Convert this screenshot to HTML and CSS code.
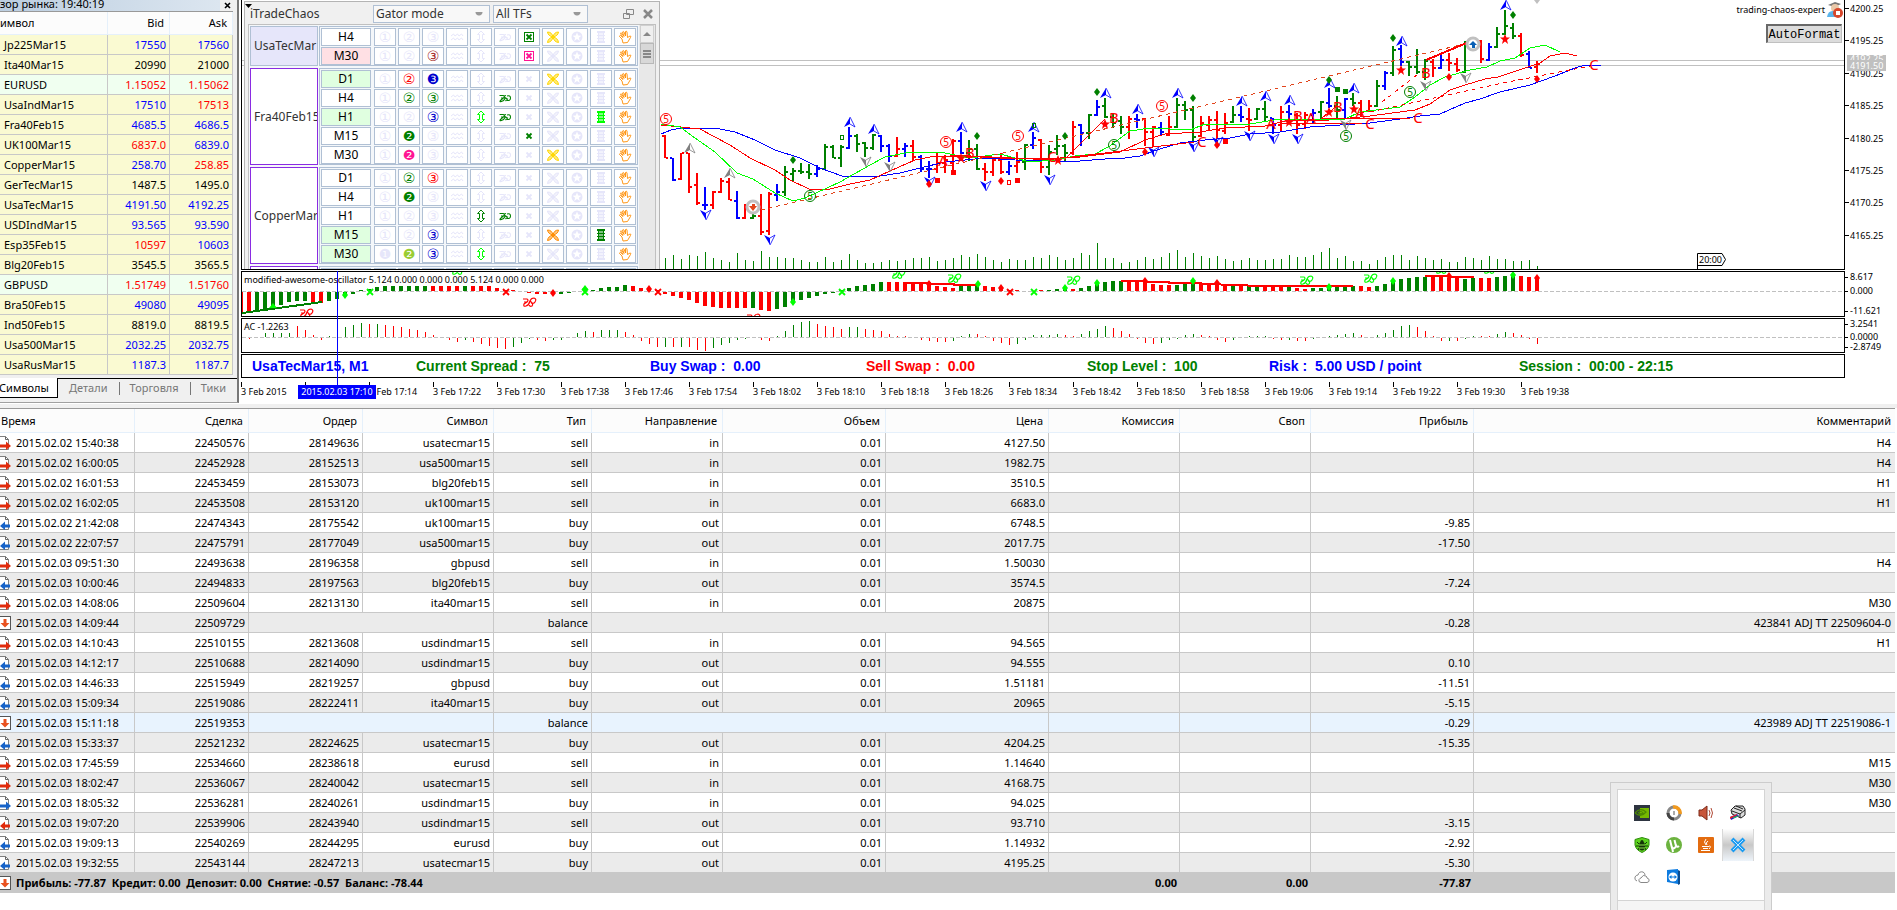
FILE: index.html
```html
<!DOCTYPE html>
<html lang="ru">
<head>
  <meta charset="UTF-8">
  <meta name="viewport" content="width=device-width, initial-scale=1.0">
  <title>UsaTecMar15, M1</title>
  <link rel="stylesheet" href="styles.css">
</head>
<body>
  <!-- Shared icons -->
  <svg class="sprite" aria-hidden="true">
    <symbol id="i-arrows" viewBox="0 0 14 14"><path d="M7 1 L10.500 4.500 H8.500 V9.500 H10.500 L7 13 L3.500 9.500 H5.500 V4.500 H3.500 Z" fill="none" stroke="currentColor"/></symbol>
    <symbol id="i-loop" viewBox="0 0 14 14"><path d="M1.500 4.500 H5 Q7 4.500 6 6.500 L2.500 9.500 Q1 11 3.500 10.500 Q6 10 7 7.500 Q5 5 8 4.500 M3 7 H6 M7.500 10 L9.500 8 L7 6.500 M9 5 Q12.500 4 12.500 7 Q12.500 10 9 9.500" fill="none" stroke="currentColor" stroke-width="1.100"/></symbol>
    <symbol id="i-x" viewBox="0 0 14 14"><path d="M4.500 4.500 L9.500 9.500 M9.500 4.500 L4.500 9.500" stroke="currentColor" stroke-width="1.800"/></symbol>
    <symbol id="i-boxx" viewBox="0 0 14 14"><rect x="2.500" y="2.500" width="9" height="9" fill="none" stroke="currentColor"/><path d="M4.500 4.500 L9.500 9.500 M9.500 4.500 L4.500 9.500" stroke="currentColor" stroke-width="1.800"/></symbol>
    <symbol id="i-petals" viewBox="0 0 14 14"><path d="M7 7 Q2 6 1.500 2 Q6 2 7 7 Q8 2 12.500 2 Q12 6 7 7 Q12 8 12.500 12.500 Q8 12 7 7 Q6 12 1.500 12.500 Q2 8 7 7" fill="currentColor" fill-opacity="0.500" stroke="currentColor"/></symbol>
    <symbol id="i-star" viewBox="0 0 14 14"><circle cx="7" cy="7" r="5.500" fill="currentColor"/><path d="M7 2.500 L8.200 5.600 L11.400 5.700 L8.900 7.700 L9.800 10.900 L7 9.100 L4.200 10.900 L5.100 7.700 L2.600 5.700 L5.800 5.600 Z" fill="#fff"/></symbol>
    <symbol id="i-list" viewBox="0 0 14 14"><path d="M3 1 H11 V3 H10 V5 H11 V6 H10 V8 H11 V9 H10 V11 H11 V13 H3 V11 H4 V9 H3 V8 H4 V6 H3 V5 H4 V3 H3 Z" fill="currentColor"/><path d="M5 4 H9 M5 7 H9 M5 10 H9" stroke="#fff"/></symbol>
    <symbol id="i-hand" viewBox="0 0 14 14"><path d="M5 13 L4 9 L1.500 6.500 Q1.500 5.500 2.500 5.500 L5 7.500 L2.500 3.500 Q2.500 2.500 3.500 3 L6 6.500 L4.500 2 Q5 1 6 2 L7.500 6 L7.500 1.500 Q8.500 .5 9 2 L9.500 7.500 L12 6 Q13.500 6 12.500 7.500 L9.500 12.500 Z" fill="#fff" stroke="currentColor" stroke-width="0.900"/></symbol>
    <symbol id="i-waves" viewBox="0 0 14 14"><path d="M1 6 L3.500 4 L5 6 L7.500 4 L9 6 L11.500 4 L13 6 M1 10 L3.500 8 L5 10 L7.500 8 L9 10 L11.500 8 L13 10" fill="none" stroke="currentColor"/></symbol>
    <symbol id="i-doc" viewBox="0 0 12 16"><path d="M-1 1.500 H5.500 L8.500 4.500 V14.500 H-1" fill="#fff" stroke="#808080"/><path d="M5.500 1.500 V4.500 H8.500" fill="none" stroke="#666"/></symbol>
    <symbol id="i-right" viewBox="0 0 12 16"><path d="M0 9.500 H6 V6.500 L11 11 L6 15 V12.500 H0 Z" fill="currentColor"/></symbol>
    <symbol id="i-left" viewBox="0 0 12 16"><path d="M10 9.500 H5 V6.500 L0 11 L5 15 V12.500 H10 Z" fill="currentColor"/></symbol>
    <symbol id="i-balance" viewBox="0 0 12 16"><rect x="-2.500" y="1.500" width="13" height="13" fill="#fff" stroke="#555"/><path d="M3.500 4 H6.500 V8 H9.500 L5 12.500 L.5 8 H3.500 Z" fill="#e8501e"/></symbol>
  </svg>

  <div class="top">
    <aside class="watch">
      <div class="watch-title"><span>Обзор рынка: 19:40:19</span>
        <button class="watch-close" aria-label="Close"><svg width="7" height="7"><path d="M1 1 L6 6 M6 1 L1 6" stroke="#000" stroke-width="1.600"/></svg></button>
      </div>
      <table class="quotes">
        <thead><tr><th class="q-symbol">Символ</th><th class="q-bid">Bid</th><th class="q-ask">Ask</th></tr></thead>
        <tbody id="quotes"></tbody>
      </table>
      <nav class="tabs">
        <button class="tab active">Символы</button>
        <button class="tab">Детали</button>
        <button class="tab">Торговля</button>
        <button class="tab">Тики</button>
      </nav>
    </aside>

    <main class="chart">
      <div class="pane price-pane">
        <div class="plot">
          <svg id="price" class="canvas"></svg>
          <div class="expert">trading-chaos-expert
            <svg width="16" height="16"><path d="M1 3 L8 0 L14 2 L8 5 Z" fill="#777"/><circle cx="8" cy="6" r="4" fill="#e9c8a8"/><path d="M0 15 Q1 8 7 9 L10 15 Z" fill="#5cb4ea"/><circle cx="11" cy="11" r="5" fill="#d8472b"/><rect x="9" y="9" width="4" height="4" fill="#fff"/></svg>
          </div>
          <button class="autoformat">AutoFormat</button>
        </div>
        <svg id="price-axis" class="axis"></svg>

        <section class="chaos">
          <div class="chaos-bar">
            <span class="chaos-title">iTradeChaos</span>
            <select class="chaos-mode" aria-label="Mode"><option>Gator mode</option></select>
            <select class="chaos-tf" aria-label="Timeframes"><option>All TFs</option></select>
            <button class="chaos-btn" aria-label="Restore"><svg width="11" height="10"><path d="M3.500 .5 H10.500 V5.500 H3.500 Z M.5 4.500 H6.500 V9.500 H.5 Z" fill="#f0f0f0" stroke="#888"/></svg></button>
            <button class="chaos-btn" aria-label="Close"><svg width="10" height="10"><path d="M1 1 L9 9 M9 1 L1 9" stroke="#888" stroke-width="2.500"/></svg></button>
          </div>
          <div class="chaos-body">
            <div class="groups" id="groups"></div>
            <div class="scroll">
              <div class="scroll-up"></div>
              <div class="scroll-thumb"><i></i><i></i><i></i></div>
            </div>
          </div>
        </section>
        <svg class="corner" width="7" height="4"><path d="M0 0 H7 L3.500 4 Z"/></svg>
      </div>

      <div class="pane ao-pane">
        <div class="plot"><svg id="ao" class="canvas"></svg><span class="pane-label">modified-awesome-oscillator 5.124 0.000 0.000 0.000 5.124 0.000 0.000</span></div>
        <svg id="ao-axis" class="axis"></svg>
      </div>
      <div class="pane ac-pane">
        <div class="plot"><svg id="ac" class="canvas"></svg><span class="pane-label">AC -1.2263</span></div>
        <svg id="ac-axis" class="axis"></svg>
      </div>
      <div class="pane info-pane">
        <div class="plot info">
          <span class="blue">UsaTecMar15, M1</span>
          <span class="green">Current Spread :&nbsp; 75</span>
          <span class="blue">Buy Swap :&nbsp; 0.00</span>
          <span class="red">Sell Swap :&nbsp; 0.00</span>
          <span class="green">Stop Level :&nbsp; 100</span>
          <span class="blue">Risk :&nbsp; 5.00 USD / point</span>
          <span class="green">Session :&nbsp; 00:00 - 22:15</span>
        </div>
      </div>
      <div class="times" id="times"></div>
      <div class="crosshair"></div>
      <div class="crosshair-date">2015.02.03 17:10</div>
    </main>
  </div>

  <section class="history">
    <table class="deals">
      <colgroup>
        <col class="c-time"><col class="c-id"><col class="c-id"><col class="c-mid"><col class="c-type"><col class="c-mid">
        <col class="c-wide"><col class="c-wide"><col class="c-mid"><col class="c-mid"><col class="c-wide"><col>
      </colgroup>
      <thead>
        <tr><th>Время</th><th>Сделка</th><th>Ордер</th><th>Символ</th><th>Тип</th><th>Направление</th><th>Объем</th><th>Цена</th><th>Комиссия</th><th>Своп</th><th>Прибыль</th><th>Комментарий</th></tr>
      </thead>
      <tbody id="deals"></tbody>
      <tfoot>
        <tr>
          <td colspan="8"><svg class="deal-icon"><use href="#i-balance"/></svg>Прибыль: -77.87&nbsp; Кредит: 0.00&nbsp; Депозит: 0.00&nbsp; Снятие: -0.57&nbsp; Баланс: -78.44</td>
          <td>0.00</td><td>0.00</td><td>-77.87</td><td></td>
        </tr>
      </tfoot>
    </table>
  </section>

  <div class="tray">
    <div class="tray-icons">
      <button aria-label="NVIDIA"><svg width="16" height="16"><rect width="16" height="16" fill="#2d3440"/><path d="M6 3 H15 V13 H6 Z" fill="#76b900"/><path d="M1 8 Q6 2 12 7 Q7 13 1 8 M4 8 Q7 5 9 8 Q7 10 5 8" fill="none" stroke="#4d8a00" stroke-width="1.200"/></svg></button>
      <button aria-label="Updater"><svg width="16" height="16"><circle cx="8" cy="8" r="6" fill="#fff" stroke="#888" stroke-width="3"/><path d="M7 2 A6 6 0 0 1 14 9" fill="none" stroke="#f39a1d" stroke-width="3.500"/><path d="M8 14 A6 6 0 0 1 2 8" fill="none" stroke="#444" stroke-width="3"/><path d="M7 6 H9 V10 H7 Z" fill="#aaa"/></svg></button>
      <button aria-label="Volume"><svg width="16" height="16"><path d="M1 5 H4 L9 1 V15 L4 11 H1 Z" fill="#c8553a" stroke="#7c2a18"/><path d="M11 5 Q13 8 11 11 M13 3 Q16 8 13 13" fill="none" stroke="#b04a36"/></svg></button>
      <button aria-label="Printer"><svg width="16" height="16"><path d="M1 5 L5 1 L13 1 L15 4 V10 L11 13 L2 9 Z" fill="#ddd" stroke="#222"/><path d="M2 6 L10 9 L15 5 M4 3 L12 6 M10 9 V13 M6 1 L13 4" stroke="#222" fill="none"/><path d="M0 12 L7 9 L9 11 L1 15 Z" fill="#22c"/><path d="M0 12 L7 9 V10 L0 14 Z" fill="#e22"/><path d="M3 13 L8 11" stroke="#2c4"/></svg></button>
      <button aria-label="Antivirus"><svg width="16" height="16"><path d="M8 .5 L15 2.500 V8 Q14 13 8 15.500 Q2 13 1 8 V2.500 Z" fill="#5dd21e" stroke="#2f8d0c"/><ellipse cx="8" cy="9" rx="3" ry="4.500" fill="#143508"/><circle cx="8" cy="4.500" r="1.500" fill="#143508"/><path d="M3 5 L5 7 M13 5 L11 7 M2 9 H14 M4 13 L5 11 M12 13 L11 11" stroke="#143508"/><path d="M5 8 H11 M5 11 H11" stroke="#8ee04e"/></svg></button>
      <button aria-label="Torrent"><svg width="16" height="16"><circle cx="8" cy="8" r="8" fill="#6cb33f"/><path d="M4 3 L6 11 Q9 12 10 9 L8.500 3 M10 8 Q11 11 13 9 M6 10 L7 15" fill="none" stroke="#fff" stroke-width="2"/></svg></button>
      <button aria-label="Java"><svg width="16" height="16"><rect width="16" height="16" rx="1" fill="#e36c10"/><path d="M8 2 Q5 5 8 8 M10 4 Q7 6 9 8 M4 9.500 H11 M5 11.500 H10 M3 13.500 H12 M11 9 Q14 9 11 12" fill="none" stroke="#fff"/></svg></button>
      <button class="selected" aria-label="Tools"><svg width="16" height="16"><path d="M2 2 L14 14 M14 2 L2 14" stroke="#1b9cf2" stroke-width="4"/><path d="M3 3 L13 13 M13 3 L3 13" stroke="#bfe4ff" stroke-width="1"/></svg></button>
      <button aria-label="Cloud"><svg width="16" height="16"><path d="M3 12 Q0 11 1 8 Q2 6 4 6 Q5 2 9 3 Q11 4 11 6" fill="none" stroke="#888"/><path d="M7 13.500 Q4 13 5 10.500 Q6 9 7 9 Q9 5 12 7 Q13 8 13 9 Q16 10 15 12 Q15 13 13 13.500 Z" fill="#fff" stroke="#888"/></svg></button>
      <button aria-label="TeamViewer"><svg width="16" height="16"><path d="M1 1 L12 0 V15 L1 13 Z" fill="#0d7be0"/><path d="M12 1 L14 2 V15 L12 16 Z" fill="#0a4d92"/><circle cx="7" cy="8" r="4.500" fill="#fff"/><path d="M3 8 L5.500 6 V7.500 H8.500 V6 L11 8 L8.500 10 V8.500 H5.500 V10 Z" fill="#0d7be0"/></svg></button>
    </div>
    <div class="tray-foot"></div>
  </div>

  <script src="script.js"></script>
</body>
</html>
```
FILE: styles.css
```css
:root {
  --ui-font: "Noto Sans", "Open Sans", sans-serif;
  --grid: #c8c8c8;
  --stripe: #ebebeb;
  --steel: #b0c0d4;
}

* {
  box-sizing: border-box;
}

body {
  margin: 0;
  overflow: hidden;
  background: #fff;
  color: #000;
  font: 11px/16px var(--ui-font);
}

button {
  padding: 0;
  border: 0;
  background: none;
  font: inherit;
  color: inherit;
}

svg {
  display: block;
}

.sprite {
  position: absolute;
  width: 0;
  height: 0;
}

.blue { color: #00f; }
.red { color: #f00; }
.green { color: #008000; }

.top {
  display: flex;
}

/* Market watch */
.watch {
  width: 239px;
  flex: none;
  padding-right: 4px;
  background: #f0f0f0;
  border-right: 2px solid #777;
  border-bottom: 1px solid #a0a0a0;
  overflow: hidden;
}

.watch-title {
  display: flex;
  justify-content: space-between;
  align-items: flex-end;
  height: 12px;
  overflow: hidden;
  background: linear-gradient(90deg, #bccee0, #dce6f0 220px, #f0f0f0 220px);
  border-bottom: 1px solid #999;
}

.watch-title span {
  margin-left: -15px;
  line-height: 15px;
}

.watch-close {
  padding: 2px;
}

table {
  border-collapse: separate;
  border-spacing: 0;
  table-layout: fixed;
  width: 100%;
}

th, td {
  padding: 0 3px;
  text-align: right;
  white-space: nowrap;
  overflow: hidden;
}

th {
  font-weight: normal;
  height: 24px;
  padding-right: 5px;
  background: #fcfcfc;
  border-right: 1px solid #e5f0fb;
  border-bottom: 1px solid #e5f0fb;
}

td {
  height: 20px;
  border-right: 1px solid var(--grid);
  border-bottom: 1px solid var(--grid);
}

.quotes th { height: 23px; }
.quotes .q-symbol { width: 108px; text-indent: -10px; }
.quotes .q-bid { width: 62px; }
.quotes td:first-child { padding-left: 4px; }
.quotes th:first-child, .quotes td:first-child { text-align: left; }
.quotes td { background: #fafad2; }
.quotes .fx td { background: #f0fff0; }

.tabs {
  display: flex;
  height: 27px;
  margin-right: -4px;
  padding-top: 3px;
}

.tab {
  height: 19px;
  flex: 1 1 auto;
  border-top: 1px solid #000;
  color: #777;
}

.tab + .tab + .tab {
  background: linear-gradient(#777, #777) 0 center / 1px 13px no-repeat;
}

.tab.active {
  flex: 0 0 58px;
  height: 20px;
  text-indent: -9px;
  color: #000;
  background: #fff;
  border-top: 0;
  border-right: 1px solid #000;
  border-bottom: 1px solid #000;
}

/* Chart */
.chart {
  position: relative;
  flex: 1;
  margin-left: 2px;
  min-width: 0;
  font: 9px/14px var(--ui-font);
}

.pane {
  display: flex;
  margin-bottom: 1px;
}

.plot {
  position: relative;
  flex: 1;
  margin-right: 52px;
  border: 1px solid #000;
  overflow: hidden;
}

.axis {
  width: 52px;
  margin-left: -52px;
  flex: none;
  height: auto;
  overflow: visible;
}

.canvas {
  width: 100%;
  height: 100%;
}

.canvas polyline {
  shape-rendering: crispEdges;
}

.price-pane { height: 270px; }
.price-pane .plot { border-top: 0; }
.ao-pane { height: 46px; }
.ac-pane { height: 35px; }
.info-pane { height: 24px; margin-bottom: 0; }

svg text {
  font-family: var(--ui-font);
}

.pane-label {
  position: absolute;
  left: 2px;
  top: 1px;
}

.expert {
  position: absolute;
  top: 2px;
  right: 1px;
  display: flex;
  align-items: center;
  gap: 2px;
}

.autoformat {
  position: absolute;
  top: 24px;
  right: 2px;
  width: 76px;
  height: 19px;
  background: #dcdcdc;
  border: 1px solid;
  border-width: 2px 1px 1px 2px;
  border-color: #696969 #c0c0c0 #c0c0c0 #696969;
  font: 12px/18px "Liberation Mono", monospace;
}

.info {
  display: grid;
  grid-template-columns: 164px 234px 216px 221px 182px 250px auto;
  align-items: center;
  padding-left: 10px;
  font: bold 14px/16px "Liberation Sans", Arial, sans-serif;
}

.times {
  display: flex;
  height: 25px;
  padding-top: 4px;
}

.times span {
  flex: 0 0 64px;
  white-space: nowrap;
  padding-top: 3px;
  background: linear-gradient(#000, #000) 0 0 / 1px 5px no-repeat;
}

.crosshair {
  position: absolute;
  left: 96px;
  top: 271px;
  bottom: 17px;
  width: 1px;
  background: #00f;
}

.crosshair-date {
  position: absolute;
  left: 57px;
  bottom: 4px;
  width: 78px;
  height: 14px;
  background: #00f;
  color: #fff;
  text-align: center;
}

/* iTradeChaos dialog */
.chaos {
  position: absolute;
  left: 3px;
  top: 1px;
  width: 416px;
  height: 268px;
  padding: 2px 3px 0;
  overflow: hidden;
  background: #f0f0f0;
  border: 1px solid #b4b4b4;
  border-bottom: 0;
  font: 12px/16px var(--ui-font);
  color: #333;
}

.corner {
  position: absolute;
  left: 4px;
  top: 4px;
}

.chaos-bar {
  display: flex;
  align-items: center;
  gap: 3px;
  height: 20px;
  padding-left: 2px;
}

.chaos-title {
  width: 120px;
}

.chaos select {
  height: 18px;
  padding: 0 2px;
  appearance: none;
  background: radial-gradient(circle at 50% 0, #999 3px, transparent 4px) right 6px center / 8px 4px no-repeat, #f8f8f8;
  border: 1px solid var(--steel);
  font: 12px/14px var(--ui-font);
  color: #333;
}

.chaos-mode { width: 117px; }
.chaos-tf { width: 95px; margin-right: 32px; }

.chaos-btn + .chaos-btn {
  margin-left: 6px;
}

.chaos-body {
  display: flex;
  height: 246px;
  border: 1px solid #c0c0c0;
}

.groups {
  width: 390px;
  flex: none;
  overflow: hidden;
  background: #f4f7fa;
}

.group {
  display: flex;
  gap: 1px;
  margin: 1px 1px 2px;
}

.group-symbol {
  display: flex;
  align-items: center;
  width: 70px;
  padding-left: 3px;
  overflow: hidden;
  background: #fff;
  border: 1px solid #8a2be2;
}

.group-symbol.current {
  background: #e6e6fa;
  border-color: var(--steel);
}

.group-rows {
  border: 1px solid var(--steel);
}

.signals {
  display: flex;
  gap: 2px;
  padding: 1px 1px 0;
}

.signals > * {
  display: flex;
  align-items: center;
  justify-content: center;
  width: 22px;
  height: 18px;
  background: #fff;
  border: 1px solid var(--steel);
  color: #e6e6fa;
}

.signals .tf {
  width: 50px;
  margin-right: 1px;
  color: #000;
}

.signals .up { background: #e0ffe0; }
.signals .down { background: #ffe0e4; }

.signals .num {
  font: 14px/16px "DejaVu Sans", sans-serif;
}

.signals svg {
  width: 14px;
  height: 14px;
}

.scroll {
  flex: 1;
  padding: 0 1px;
  background: #e8e8e8;
}

.scroll-up, .scroll-thumb {
  display: flex;
  flex-direction: column;
  align-items: center;
  justify-content: center;
  gap: 1px;
  height: 18px;
  background: #efefef;
  border: 1px solid #d0d0d0;
}

.scroll-up::before {
  content: "";
  border: 4px solid transparent;
  border-top: 0;
  border-bottom-color: #888;
}

.scroll-thumb {
  height: 21px;
  background: #d8d8d8;
  border-color: #b8b8b8;
}

.scroll-thumb i {
  width: 8px;
  height: 2px;
  background: #888;
}

/* Deals history */
.history {
  margin-top: 1px;
  padding-right: 2px;
  border-top: 4px solid #f0f0f0;
}

.deals {
  border-top: 1px solid #999;
}

.c-time { width: 135px; }
.c-id { width: 114px; }
.c-mid { width: 131px; }
.c-type { width: 98px; }
.c-wide { width: 163px; }

.deals th:first-child { text-align: left; padding-left: 1px; }
.deals td:first-child { text-align: left; padding-left: 0; }
.deals tbody tr:nth-child(even) { background: var(--stripe); }
.deals tbody tr.hover { background: #e8f3fe; }
.deals tbody tr:last-child td { border-bottom: 0; height: 19px; }
.deals th:last-child, .deals td:last-child { border-right: 0; padding-right: 4px; }

.deals tfoot td {
  background: var(--grid);
  border: 0;
  font-weight: bold;
  height: 21px;
}

.deal-icon {
  display: inline-block;
  width: 12px;
  height: 16px;
  margin-right: 4px;
  vertical-align: top;
}

.buy { color: #1763c8; }
.sell { color: #e02b0c; }

/* Tray popup */
.tray {
  position: fixed;
  right: 125px;
  bottom: 0;
  width: 162px;
  padding: 6px 6px 0;
  background: #ebebeb;
  border: 1px solid #ccc;
  border-bottom: 0;
}

.tray-icons {
  display: grid;
  grid-template-columns: repeat(4, 32px);
  grid-auto-rows: 32px;
  padding: 7px 8px;
  background: #fff;
  border: 1px solid #d4d4d4;
}

.tray-icons button {
  display: flex;
  align-items: center;
  justify-content: center;
}

.tray-icons .selected {
  background: linear-gradient(#fff, #c8c8c8 50%, #eef4fa);
  border: 1px solid #d8d8d8;
  border-width: 0 1px;
}

.tray-foot {
  height: 9px;
  background: #f5f5f5;
  border: 1px solid #d4d4d4;
  border-width: 0 1px;
}
```
FILE: script.js
```js
const NS = 'http://www.w3.org/2000/svg';
const COLORS = { r: '#ff0000', g: '#008000', b: '#0000ff', l: '#00ff00', s: '#808080' };

function add(parent, tag, attrs, text) {
  const node = document.createElementNS(NS, tag);
  for (const key in attrs) node.setAttribute(key, attrs[key]);
  if (text) node.textContent = text;
  parent.appendChild(node);
  return node;
}

// Every pane is drawn in window coordinates, shifted into its own canvas
function layer(id, top) {
  return add(document.getElementById(id), 'g', { transform: `translate(-242 ${-top})` });
}

function line(g, points, stroke, extra) {
  add(g, 'polyline', Object.assign({ points, fill: 'none', stroke }, extra));
}

/* ---- Market watch ---- */
const quotes = [
  ['Jp225Mar15', '17550', 'b', '17560', 'b'], ['Ita40Mar15', '20990', '', '21000', ''],
  ['EURUSD', '1.15052', 'r', '1.15062', 'r'], ['UsaIndMar15', '17510', 'b', '17513', 'r'],
  ['Fra40Feb15', '4685.5', 'b', '4686.5', 'b'], ['UK100Mar15', '6837.0', 'r', '6839.0', 'b'],
  ['CopperMar15', '258.70', 'b', '258.85', 'r'], ['GerTecMar15', '1487.5', '', '1495.0', ''],
  ['UsaTecMar15', '4191.50', 'b', '4192.25', 'b'], ['USDIndMar15', '93.565', 'b', '93.590', 'b'],
  ['Esp35Feb15', '10597', 'r', '10603', 'b'], ['Blg20Feb15', '3545.5', '', '3565.5', ''],
  ['GBPUSD', '1.51749', 'r', '1.51760', 'r'], ['Bra50Feb15', '49080', 'b', '49095', 'b'],
  ['Ind50Feb15', '8819.0', '', '8819.5', ''], ['Usa500Mar15', '2032.25', 'b', '2032.75', 'b'],
  ['UsaRusMar15', '1187.3', 'b', '1187.7', 'b'],
];
const cls = { b: 'blue', r: 'red', '': '' };
document.getElementById('quotes').innerHTML = quotes.map(([name, bid, bc, ask, ac]) =>
  `<tr class="${/USD$/.test(name) ? 'fx' : ''}"><td>${name}</td><td class="${cls[bc]}">${bid}</td><td class="${cls[ac]}">${ask}</td></tr>`).join('');

/* ---- Signals dialog: column index -> colour, "!" means filled ---- */
const groups = [
  ['UsaTecMar', 'current', [
    ['H4', '', { 6: 'green box', 7: 'gold' }],
    ['M30', 'down', { 2: 'brown', 6: 'deeppink box' }]]],
  ['Fra40Feb15', '', [
    ['D1', 'up', { 1: 'red', 2: 'mediumblue !', 7: 'gold' }],
    ['H4', '', { 1: 'green', 2: 'green', 5: 'green' }],
    ['H1', 'up', { 2: 'mediumblue', 4: 'lime', 5: 'green', 9: 'lime' }],
    ['M15', '', { 1: 'green !', 6: 'green' }],
    ['M30', '', { 1: 'deeppink !', 7: 'gold' }]]],
  ['CopperMar15', '', [
    ['D1', '', { 1: 'green', 2: 'red' }],
    ['H4', '', { 1: 'green !' }],
    ['H1', '', { 4: 'green', 5: 'green' }],
    ['M15', 'up', { 2: 'mediumblue', 7: 'darkorange', 9: 'green' }],
    ['M30', 'up', { 0: 'lavender !', 1: 'yellowgreen !', 2: 'mediumblue', 4: 'lime' }]]],
  ['', '', [['', '', {}]]],
];
const icons = ['', '', '', 'waves', 'arrows', 'loop', 'x', 'petals', 'star', 'list', 'hand'];
document.getElementById('groups').innerHTML = groups.map(([symbol, state, rows]) => {
  const body = rows.map(([tf, trend, on]) => {
    const cells = icons.map((icon, i) => {
      const [color, mod] = (on[i] || (i === 10 ? 'darkorange' : '')).split(' ');
      const style = color ? ` style="color:${color}"` : '';
      if (!tf) return '<span></span>';
      if (i < 3) return `<span class="num"${style}>${(mod === '!' ? '❶❷❸' : '①②③')[i]}</span>`;
      return `<span${style}><svg><use href="#i-${mod === 'box' ? 'boxx' : icon}"/></svg></span>`;
    }).join('');
    return `<div class="signals"><span class="tf ${trend}">${tf}</span>${cells}</div>`;
  }).join('');
  return `<div class="group"><div class="group-symbol ${state}">${symbol}</div><div class="group-rows">${body}</div></div>`;
}).join('');

/* ---- Price chart: colour, high, low, open, close ---- */
const bars = `r135 158 136 158,b158 181 158 180,r153 180 179 153,r153 193 153 187,r173 205 185 203,b187 210 205 205,r191 209 205 192,r178 193 192 181,r178 200 182 200,b191 219 201 218,
r204 219 218 206,g206 219 218 216,r194 235 216 232,r192 235 231 194,b184 201 195 192,g166 196 192 172,g168 181 174 171,g163 174 171 172,g164 179 172 174,b165 177 174 169,
g144 170 169 147,g145 158 147 158,g145 167 158 147,b127 149 148 136,g134 152 136 144,g142 157 143 148,g134 150 148 135,b135 152 136 146,b144 162 146 156,r137 157 156 149,
b143 157 149 146,r140 161 146 157,b155 172 157 169,b161 178 169 169,r153 173 169 163,r155 173 163 160,r139 174 163 141,b132 154 141 153,g140 161 153 149,g144 170 149 169,
r163 181 169 172,r158 176 172 160,r153 174 160 172,b161 175 172 166,r152 173 166 162,g144 170 162 145,b132 149 145 138,r139 173 140 167,g145 175 167 152,g135 155 149 146,
g144 162 146 153,r121 155 153 127,b124 146 125 133,g114 139 133 115,b100 116 115 107,g98 118 106 117,g113 128 117 123,g116 134 121 127,r116 139 127 119,b114 128 119 120,
r118 146 119 132,r126 147 132 127,b122 135 128 132,r116 136 135 127,g98 128 127 105,g101 120 105 110,g106 141 110 137,r116 137 136 123,r116 130 125 120,r111 139 120 130,
r113 134 131 123,g106 123 122 115,b106 122 115 117,r108 131 119 120,g108 120 119 109,g101 122 109 117,b118 134 118 125,r106 131 125 112,b105 123 112 114,r113 134 115 125,
r112 129 124 115,b109 124 115 113,g101 121 112 102,b88 108 103 106,g96 118 106 110,b98 119 110 99,g93 106 99 103,r100 117 103 112,r100 112 111 106,g80 107 106 86,
b71 90 86 73,g46 76 73 50,b45 66 49 62,g61 76 62 67,g49 74 67 72,g59 80 72 61,r59 77 62 68,b54 69 68 60,r53 71 60 63,r58 72 64 70,
g41 73 72 42,r40 44 42 41,r40 63 41 59,b43 61 60 47,g27 48 47 34,g10 35 34 26,g23 39 28 36,r33 57 36 55,b51 68 54 68,r61 73 67 64`.split(',');

const volumes = [11,14,10,14,13,17,11,9,7,16,9,8,18,12,12,11,11,9,7,7,12,7,9,15,9,6,6,7,9,8,9,11,11,12,8,9,11,14,12,15,12,9,7,10,9,9,12,11,14,12,9,
  11,16,14,26,11,11,6,7,9,12,10,12,16,19,12,16,13,11,13,10,8,9,11,9,9,10,10,14,12,12,14,17,21,11,13,8,8,5,9,12,14,14,9,13,11,9,10,7,7,12,11,9,13,10,10,8,8,9,3];

const price = layer('price', 0);
[60, 65].forEach(y => add(price, 'rect', { x: 242, y, width: '100%', height: 1, fill: '#c0c0c0' }));

volumes.forEach((h, i) => add(price, 'rect', { x: 665 + i * 8, y: 269 - h, width: 1, height: h, fill: COLORS.g }));

bars.forEach((bar, i) => {
  const text = bar.trim();
  const fill = COLORS[text[0]];
  const [high, low, open, close] = text.slice(1).split(' ').map(Number);
  const x = 664 + i * 8;
  add(price, 'rect', { x, y: high, width: 2, height: low - high, fill });
  add(price, 'rect', { x: x - 2, y: open - 1, width: 2, height: 2, fill });
  add(price, 'rect', { x: x + 2, y: close - 1, width: 2, height: 2, fill });
});

// Alligator
line(price, '661,134 671,130 681,128 700,128 720,129 735,132 755,140 775,150 800,158 820,168 842,176 880,176 900,173 920,168 945,162 985,158 1015,160 1060,161 1080,161 1105,159 1125,158 1140,156 1160,149 1180,143 1205,140 1230,138 1250,134 1280,132 1310,127 1340,125 1370,123 1400,119 1420,116 1440,114 1465,103 1480,99 1500,92 1530,85 1555,76 1575,68 1585,65 1601,65', COLORS.b);
line(price, '661,125 700,129 730,145 750,158 775,170 790,180 809,189 830,189 850,184 870,180 890,171 915,160 935,156 960,156 1000,158 1060,158 1080,157 1120,152 1145,140 1165,134 1200,132 1225,128 1265,126 1285,121 1330,120 1370,116 1415,110 1430,104 1450,90 1465,85 1485,79 1498,77 1525,68 1540,63 1550,56 1565,53 1577,56', COLORS.r);
line(price, '661,124 680,127 695,138 715,152 737,173 753,179 775,193 793,201 805,198 840,182 870,165 885,157 910,152 940,152 970,158 1000,154 1030,162 1055,160 1075,156 1095,154 1110,146 1130,131 1150,128 1190,130 1205,124 1250,124 1280,119 1325,119 1345,119 1360,112 1400,107 1415,97 1430,85 1445,77 1470,70 1487,67 1500,61 1515,58 1530,48 1545,45 1560,52', COLORS.l);

// Trade and wave lines
line(price, '753,212 1473,42', '#e2451c', { 'stroke-dasharray': '4 4' });
line(price, '1382,102 1418,74', COLORS.r, { 'stroke-dasharray': '4 4' });
line(price, '1370,112 1498,84 1590,66', COLORS.r, { 'stroke-dasharray': '4 4' });
line(price, '950,155 1054,160', COLORS.r);
line(price, '1064,160 1105,119', COLORS.r);
line(price, '1064,158 1194,142', COLORS.r);
line(price, '1338,105 1322,118 1410,118', COLORS.r);
line(price, '1280,123 1362,123', COLORS.r);
line(price, '1426,60 1469,42', COLORS.r, { 'stroke-width': 2 });

function arrows(list, color, dir) {
  list.forEach(([x, y]) => {
    const g = add(price, 'g', { transform: `translate(${x} ${y}) scale(1 ${dir})` });
    add(g, 'path', { d: 'M0 -5 L-6 5 L0 2 Z', fill: COLORS[color] });
    add(g, 'path', { d: 'M0 -5 L5 5 L0 2', fill: 'none', stroke: COLORS[color], 'stroke-width': 0.8 });
  });
}
arrows([[850,122],[874,129],[962,127],[1034,127],[1106,93],[1138,109],[1178,93],[1242,101],[1266,96],[1290,100],[1330,83],[1354,88],[1402,41],[1506,5]], 'b', 1);
arrows([[690,148],[730,173]], 's', 1);
arrows([[706,215],[770,240],[930,182],[986,186],[1050,180],[1154,152],[1194,147],[1218,142],[1250,136],[1274,139],[1298,139]], 'b', -1);
arrows([[866,162],[890,167],[1346,125],[1426,86],[1466,78]], 's', -1);

function diamonds(g, list, color) {
  list.forEach(([x, y]) => add(g, 'path', { d: `M${x} ${y - 4} L${x + 3} ${y} L${x} ${y + 4} L${x - 3} ${y} Z`, fill: COLORS[color] || color }));
}
diamonds(price, [[793,160],[977,136],[1065,136],[1097,92],[1193,98],[1329,80],[1393,38],[1513,15]], 'g');
diamonds(price, [[929,184],[1001,181],[1145,152],[1217,145],[1449,77],[1537,79]], 'r');
diamonds(price, [[1537,0]], '#c0c0c0');

[[937,180],[953,172],[1017,180],[1225,141]].forEach(([x, y]) => add(price, 'rect', { x: x - 2, y: y - 2, width: 5, height: 5, fill: COLORS.r }));
[[1337,89],[1345,91]].forEach(([x, y]) => add(price, 'rect', { x: x - 2, y: y - 2, width: 5, height: 5, fill: COLORS.g }));
[[842,137,'g'],[1034,125,'g'],[1009,182,'r']].forEach(([x, y, c]) => add(price, 'rect', { x: x - 1.5, y: y - 1.5, width: 3, height: 4, fill: 'none', stroke: COLORS[c] }));

[[961,158],[1058,160],[1105,124],[1289,122],[1329,112],[1354,109],[1401,70],[1505,39]].forEach(([x, y]) =>
  add(price, 'path', { d: 'M0 -5 L1.500 -1.500 L5 -1.500 L2 1 L3 5 L0 2.500 L-3 5 L-2 1 L-5 -1.500 L-1.500 -1.500 Z', transform: `translate(${x} ${y})`, fill: COLORS.r }));

[[666,119,'r'],[946,142,'r'],[1018,136,'r'],[1162,106,'r'],[810,196,'g'],[1114,145,'g'],[1346,136,'g'],[1410,92,'g']].forEach(([x, y, c]) => {
  add(price, 'circle', { cx: x, cy: y, r: 5.5, fill: 'none', stroke: COLORS[c] });
  add(price, 'text', { x, y: y + 4, fill: COLORS[c], 'font-size': 10, 'text-anchor': 'middle' }, '5');
});

[['A',943,161],['B',970,153],['C',1052,157],['B',1114,118],['C',1202,142],['A',1271,124],['B',1298,116],['A',1311,118],['B',1338,107],['A',1360,113],['C',1370,124],['B',1426,73],['C',1418,118],['C',1594,65]].forEach(([t, x, y]) =>
  add(price, 'text', { x, y: y + 5, fill: COLORS.r, 'font-size': 15, 'text-anchor': 'middle' }, t));

[[753,207],[1473,44]].forEach(([x, y]) => add(price, 'circle', { cx: x, cy: y, r: 6, fill: '#fff', stroke: '#c0c0c0', 'stroke-width': 3 }));
add(price, 'path', { d: 'M752 204 H755 V206 H757 L753 211 L749 206 H752 Z', fill: '#e2451c' });
add(price, 'path', { d: 'M1472 48 H1475 V45 H1477 L1473 41 L1469 45 H1472 Z', fill: '#0a5fb4' });

add(price, 'path', { d: 'M1697.5 269 V253.5 H1722 L1725.5 259.5 L1722 265.5 H1697.5', fill: '#fff', stroke: '#000' });
add(price, 'text', { x: 1699, y: 263, 'font-size': 9 }, '20:00');

/* ---- Axes ---- */
const priceAxis = document.getElementById('price-axis');
['4200.25', '4195.25', '4190.25', '4185.25', '4180.25', '4175.25', '4170.25', '4165.25'].forEach((label, i) => {
  const y = Math.round(8 + i * 32.4);
  add(priceAxis, 'rect', { x: 0, y, width: 4, height: 1 });
  add(priceAxis, 'text', { x: 5, y: y + 4, 'font-size': 9 }, label);
});
add(priceAxis, 'rect', { x: 2, y: 55, width: 39, height: 16, fill: '#c0c0c0' });
add(priceAxis, 'text', { x: 5, y: 62, 'font-size': 9, fill: '#fff' }, '4192.25');
add(priceAxis, 'rect', { x: 2, y: 60, width: 39, height: 11, fill: '#c0c0c0' });
add(priceAxis, 'text', { x: 5, y: 69, 'font-size': 9, fill: '#fff' }, '4191.50');

function axis(id, labels) {
  labels.forEach(([y, text]) => {
    add(document.getElementById(id), 'rect', { x: 0, y: y - 3, width: 3, height: 1 });
    add(document.getElementById(id), 'text', { x: 5, y, 'font-size': 9 }, text);
  });
}
axis('ao-axis', [[9, '8.617'], [23, '0.000'], [43, '-11.621']]);
axis('ac-axis', [[9, '3.2541'], [22, '0.0000'], [32, '-2.8749']]);

/* ---- Oscillators, one value per bar starting at x = 241 ---- */
const aoValues = `r-20 r-20 g-19 g-18 g-14 g-13 g-10 g-9 g-9 r-10 r-11 g-9 g-7 g-4 g-2 g1 g2 g4 g5 g5 g5 g5 g5 g5 r5 r5 r5 r5 g5 r5 r5 r5 r3 r1 r1 r0 r-1 r-2 r-2 r-2 g-2 g-1 g0 g1 g1 g3 g4 g4 g6 r5 r3 r2 r1
r-2 r-4 r-6 r-8 r-11 r-14 r-15 r-16 r-16 r-16 r-16 g-16 r-18 r-19 g-17 g-15 g-11 g-8 g-6 g-4 g-2 g-1 g1 g3 g5 g6
g7 g9 r9 r9 r9 r9 r8 r8 r5 r4 r3 g5 g6 g6 r5 r4 r2 r1 r1 r0 r0 r1 g1 g2 g4 r2 g3 g5 g7 g9 g10 g10 r11 r10 r9 r7 r6 r6 g6 g7 g8 r8 r8 r8 r6 g6 r5 g5 g5 r5 r5 r5 g4 r3 r2 g3 g3 g4 g5 g5 g5 r5 r4
g5 g7 g9 g12 g13 g14 g14 r15 r14 r13 r13 g12 g13 r13 r13 g14 g15 g15 r15 r14 r13`.split(/\s+/);
const acValues = `g0 r-1 g0 g4 g4 g4 g4 r11 r7 r2 r-2 g1 g6 g10 g12 g14 r13 g13 r12 r11 r10 r8 r7 r5 r2 r0 r-2 r-4 g-2 r-4 r-6 r-8 r-10 r-11 g-9 g-5 g-1 r-2 r-3 g-2 g-2 g0 g4 g6 r5 g7 g7 g7 r5 r2 r-3 r-6 r-9
g-9 r-9 g-9 r-9 r-12 r-13 g-10 g-7 g-5 g-2 g-1 r0 r-2 r-3 g1 g6 g12 g15 g16 r13 r11 r10 r8 g10 g10 r8
r7 r6 r3 r1 r1 r0 r-2 r-3 r-4 r-4 g-3 g1 g3 r3 r1 r-3 r-5 r-7 g-6 g-2 g2 g2 g2 g3 r2 r1 g3 g6 g8 g11 r9 r6 r3 r-1 r-5 r-6 g-5 g-2 g-1 g2 g3 r2 r1 r-2 r-4 g-2 g0 g1 g1 g1 r-1 r-2 g-2 r-3 r-3 g-1 g0 g1 g2 g3 g4 r2 r0
g2 g4 g7 g11 g12 r10 r6 r1 r-3 g-3 r-3 g-1 g1 r1 r1 g3 g5 r4 r2 r-1 r-6`.split(/\s+/);

function histogram(g, values, base, width) {
  values.forEach((item, i) => {
    const v = Number(item.slice(1));
    if (!v) return;
    const x = 241 + i * 8 - Math.floor(width / 2);
    add(g, 'rect', { x, y: v > 0 ? base - v : base + 1, width, height: Math.abs(v), fill: COLORS[item[0]] });
  });
}

const ao = layer('ao', 272);
const ac = layer('ac', 319);
[[ao, 291], [ac, 337]].forEach(([g, y]) => add(g, 'line', { x1: 242, x2: 1844, y1: y + 0.5, y2: y + 0.5, stroke: '#c0c0c0', 'stroke-dasharray': '4 2' }));
histogram(ao, aoValues, 291, 4);
histogram(ac, acValues, 337, 1);

line(ao, '242,313 322,302', COLORS.g, { 'stroke-width': 2 });
line(ao, '905,283 930,283 930,284 954,284 954,285 978,285', COLORS.r, { 'stroke-width': 2 });
line(ao, '1121,281 1145,281 1145,282 1169,282 1169,283 1193,283 1230,285 1265,286 1353,286', COLORS.r, { 'stroke-width': 2 });
line(ao, '1425,276 1449,276 1449,277 1474,277', COLORS.r, { 'stroke-width': 2 });
diamonds(ao, [[345,295],[585,289],[793,302],[978,284],[1065,288],[1097,283],[1193,281],[1329,287],[1393,281],[1513,275]], 'l');
diamonds(ao, [[553,293],[649,289],[929,284],[1001,288],[1145,281],[1217,283],[1449,276],[1537,278]], 'r');
add(ao, 'path', { d: 'M273 303 L277 308 H269 Z', fill: COLORS.l });
[[370,292,'l'],[585,292,'l'],[842,292,'l'],[1034,292,'l'],[506,292,'r'],[658,292,'r'],[1010,292,'r']].forEach(([x, y, c]) =>
  add(ao, 'path', { d: 'M-3 -3 L3 3 M3 -3 L-3 3', transform: `translate(${x} ${y})`, stroke: COLORS[c], 'stroke-width': 1.8 }));
[[458,270,'l'],[898,274,'l'],[954,278,'l'],[1073,280,'l'],[1306,280,'l'],[1370,278,'l'],[1442,269,'l'],[1490,269,'l'],[306,313,'r'],[529,302,'r'],[753,318,'r']].forEach(([x, y, c]) =>
  add(ao, 'path', { d: 'M-6 -3 H-2 Q0 -2 -2 0 L-5 2 Q-6 5 -3 4 Q0 3 1 -1 Q2 -4 5 -4 Q8 -3 6 0 Q5 2 2 1 M-5 0 H-2 M1 -1 Q5 2 3 4 Q1 5 0 3', transform: `translate(${x} ${y})`, fill: 'none', stroke: COLORS[c], 'stroke-width': 1.2 }));

/* ---- Time scale ---- */
const times = ['3 Feb 2015', ''];
for (let m = 17 * 60 + 14; m <= 19 * 60 + 38; m += 8) {
  times.push(`3 Feb ${Math.floor(m / 60)}:${String(m % 60).padStart(2, '0')}`);
}
document.getElementById('times').innerHTML = times.map(t => `<span>${t}</span>`).join('');

/* ---- Deals: time, deal, order, symbol, type, direction, price, profit, comment ---- */
const deals = [
  ['2015.02.02 15:40:38', '22450576', '28149636', 'usatecmar15', 'sell', 'in', '4127.50', '', 'H4'],
  ['2015.02.02 16:00:05', '22452928', '28152513', 'usa500mar15', 'sell', 'in', '1982.75', '', 'H4'],
  ['2015.02.02 16:01:53', '22453459', '28153073', 'blg20feb15', 'sell', 'in', '3510.5', '', 'H1'],
  ['2015.02.02 16:02:05', '22453508', '28153120', 'uk100mar15', 'sell', 'in', '6683.0', '', 'H1'],
  ['2015.02.02 21:42:08', '22474343', '28175542', 'uk100mar15', 'buy', 'out', '6748.5', '-9.85', ''],
  ['2015.02.02 22:07:57', '22475791', '28177049', 'usa500mar15', 'buy', 'out', '2017.75', '-17.50', ''],
  ['2015.02.03 09:51:30', '22493638', '28196358', 'gbpusd', 'sell', 'in', '1.50030', '', 'H4'],
  ['2015.02.03 10:00:46', '22494833', '28197563', 'blg20feb15', 'buy', 'out', '3574.5', '-7.24', ''],
  ['2015.02.03 14:08:06', '22509604', '28213130', 'ita40mar15', 'sell', 'in', '20875', '', 'M30'],
  ['2015.02.03 14:09:44', '22509729', '', '', 'balance', '', '', '-0.28', '423841 ADJ TT 22509604-0'],
  ['2015.02.03 14:10:43', '22510155', '28213608', 'usdindmar15', 'sell', 'in', '94.565', '', 'H1'],
  ['2015.02.03 14:12:17', '22510688', '28214090', 'usdindmar15', 'buy', 'out', '94.555', '0.10', ''],
  ['2015.02.03 14:46:33', '22515949', '28219257', 'gbpusd', 'buy', 'out', '1.51181', '-11.51', ''],
  ['2015.02.03 15:09:34', '22519086', '28222411', 'ita40mar15', 'buy', 'out', '20965', '-5.15', ''],
  ['2015.02.03 15:11:18', '22519353', '', '', 'balance', '', '', '-0.29', '423989 ADJ TT 22519086-1'],
  ['2015.02.03 15:33:37', '22521232', '28224625', 'usatecmar15', 'buy', 'out', '4204.25', '-15.35', ''],
  ['2015.02.03 17:45:59', '22534660', '28238618', 'eurusd', 'sell', 'in', '1.14640', '', 'M15'],
  ['2015.02.03 18:02:47', '22536067', '28240042', 'usatecmar15', 'sell', 'in', '4168.75', '', 'M30'],
  ['2015.02.03 18:05:32', '22536281', '28240261', 'usdindmar15', 'buy', 'in', '94.025', '', 'M30'],
  ['2015.02.03 19:07:20', '22539906', '28243940', 'usdindmar15', 'sell', 'out', '93.710', '-3.15', ''],
  ['2015.02.03 19:09:13', '22540269', '28244295', 'eurusd', 'buy', 'out', '1.14932', '-2.92', ''],
  ['2015.02.03 19:32:55', '22543144', '28247213', 'usatecmar15', 'buy', 'out', '4195.25', '-5.30', ''],
];
document.getElementById('deals').innerHTML = deals.map(([time, deal, order, symbol, type, dir, cost, profit, note], i) => {
  const balance = type === 'balance';
  const icon = balance
    ? '<svg class="deal-icon"><use href="#i-balance"/></svg>'
    : `<svg class="deal-icon ${type}"><use href="#i-doc"/><use href="#i-${dir === 'in' ? 'right' : 'left'}"/></svg>`;
  const middle = balance
    ? `<td colspan="2"></td><td>${type}</td><td colspan="3"></td>`
    : `<td>${order}</td><td>${symbol}</td><td>${type}</td><td>${dir}</td><td>0.01</td><td>${cost}</td>`;
  return `<tr class="${i === 14 ? 'hover' : ''}"><td>${icon}${time}</td><td>${deal}</td>${middle}<td></td><td></td><td>${profit}</td><td>${note}</td></tr>`;
}).join('');
```
